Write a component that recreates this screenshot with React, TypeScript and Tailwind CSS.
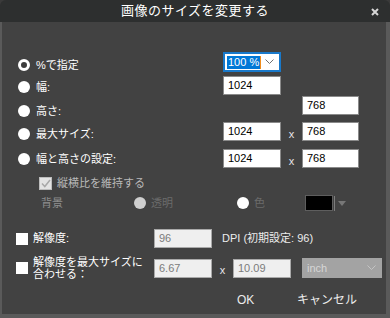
const font = "font-['Liberation_Sans','Noto_Sans_CJK_JP',sans-serif]";

function Radio({ checked, disabled }: { checked?: boolean; disabled?: boolean }) {
  if (checked) {
    return <span className="w-[12px] h-[12px] rounded-full border-[3px] border-white bg-[#3c3c3c] shrink-0" />;
  }
  return <span className={`w-[12px] h-[12px] rounded-full shrink-0 ${disabled ? "bg-[#cfcfcf]" : "bg-white"}`} />;
}

function Box({ value, w = "w-[58px]", disabled }: { value: string; w?: string; disabled?: boolean }) {
  return (
    <div
      className={`${w} h-[19px] shrink-0 flex items-center pl-[4px] text-[11px] border ${
        disabled ? "bg-[#efefef] border-[#a9a9a9] text-[#7b7b7b]" : "bg-white border-[#8a8a8a] text-black"
      }`}
    >
      {value}
    </div>
  );
}

function Times() {
  return <span className="w-[21px] shrink-0 text-center text-[11px] text-[#e6e6e6] mt-[4px]">x</span>;
}

export default function App() {
  return (
    <div className={`w-[390px] h-[318px] bg-[#3a3a3a] ${font} text-[11px] text-white select-none`}>
      <div className="h-[22px] bg-[#2d2f2f] rounded-t-[6px] flex items-center justify-center relative">
        <span className="text-[13px] text-white tracking-[0.5px]">画像のサイズを変更する</span>
        <svg className="absolute right-[11px] top-[8px]" width="8" height="8" viewBox="0 0 8 8">
          <path d="M1 1L7 7M7 1L1 7" stroke="#d6d6d6" strokeWidth="2" />
        </svg>
      </div>

      <div className="h-[296px] bg-[#424242] border-l-2 border-r-4 border-b-4 border-[#5a5a5a] pt-[31px]">
        {/* % */}
        <div className="flex items-start h-[23px] pl-[16px]">
          <div className="w-[205px] flex items-center gap-[6px] mt-[4px]">
            <Radio checked />
            <span>%で指定</span>
          </div>
          <div className="w-[58px] h-[20px] -mt-[1px] border-2 border-[#1979ca] bg-white flex items-center pl-[2px] justify-between pr-[5px]">
            <span className="flex items-center">
              <span className="bg-[#0078d7] text-white text-[11px] px-[1px] leading-[13px]">100 %</span>
              <span className="w-[1px] h-[13px] bg-[#f08c1c]" />
            </span>
            <svg width="9" height="6" viewBox="0 0 9 6">
              <path d="M0.5 0.5L4.5 4.5L8.5 0.5" stroke="#707070" fill="none" />
            </svg>
          </div>
        </div>

        {/* width */}
        <div className="flex items-start h-[20px] pl-[16px]">
          <div className="w-[205px] flex items-center gap-[6px] mt-[3px]">
            <Radio />
            <span>幅:</span>
          </div>
          <Box value="1024" />
        </div>

        {/* height */}
        <div className="flex items-start h-[26px] pl-[16px]">
          <div className="w-[284px] flex items-center gap-[6px] mt-[7px]">
            <Radio />
            <span>高さ:</span>
          </div>
          <Box value="768" w="w-[57px]" />
        </div>

        {/* max size */}
        <div className="flex items-start h-[27px] pl-[16px]">
          <div className="w-[205px] flex items-center gap-[6px] mt-[4px]">
            <Radio />
            <span>最大サイズ:</span>
          </div>
          <Box value="1024" />
          <Times />
          <Box value="768" w="w-[57px]" />
        </div>

        {/* width & height */}
        <div className="flex items-start h-[23px] pl-[16px]">
          <div className="w-[205px] flex items-center gap-[6px] mt-[2px]">
            <Radio />
            <span>幅と高さの設定:</span>
          </div>
          <Box value="1024" />
          <Times />
          <Box value="768" w="w-[57px]" />
        </div>

        {/* aspect */}
        <div className="flex items-center h-[22px] pl-[37px] gap-[5px]">
          <span className="w-[13px] h-[13px] bg-[#e3e3e3] border border-[#bdbdbd] flex items-center justify-center">
            <svg width="10" height="9" viewBox="0 0 10 9">
              <path d="M1 4.5L3.8 7.5L9 1" stroke="#a8a8a8" strokeWidth="1.5" fill="none" />
            </svg>
          </span>
          <span className="text-[#b9b9b9]">縦横比を維持する</span>
        </div>

        {/* background */}
        <div className="flex items-center h-[18px] pl-[39px]">
          <span className="w-[93px] text-[#8e8e8e]">背景</span>
          <div className="w-[103px] flex items-center gap-[5px]">
            <Radio disabled />
            <span className="text-[#6b6b6b]">透明</span>
          </div>
          <div className="w-[68px] flex items-center gap-[5px]">
            <Radio />
            <span className="text-[#6b6b6b]">色</span>
          </div>
          <span className="w-[28px] h-[16px] bg-black border border-[#5e5e5e]" />
          <span className="w-[1px] h-[15px] bg-[#7c7c7c] ml-[1px]" />
          <svg className="ml-[3px] mt-[1px]" width="8" height="5" viewBox="0 0 8 5">
            <path d="M0 0H8L4 5Z" fill="#777777" />
          </svg>
        </div>

        {/* resolution */}
        <div className="flex items-center h-[19px] mt-[17px] pl-[14px]">
          <div className="w-[138px] flex items-center gap-[5px]">
            <span className="w-[12px] h-[12px] bg-white" />
            <span>解像度:</span>
          </div>
          <Box value="96" disabled />
          <span className="ml-[10px] text-[#ececec]">DPI (初期設定: 96)</span>
        </div>

        {/* fit */}
        <div className="flex items-center h-[20px] mt-[10px] pl-[14px]">
          <div className="w-[138px] flex items-center gap-[5px]">
            <span className="w-[12px] h-[12px] bg-white" />
            <span className="leading-[12px]">
              解像度を最大サイズに
              <br />
              合わせる：
            </span>
          </div>
          <Box value="6.67" disabled />
          <Times />
          <Box value="10.09" disabled />
          <div className="ml-[11px] w-[80px] h-[20px] bg-[#a3a3a3] flex items-center justify-between pl-[5px] pr-[6px]">
            <span className="text-[#d6d6d6]">inch</span>
            <svg width="9" height="6" viewBox="0 0 9 6">
              <path d="M0.5 0.5L4.5 4.5L8.5 0.5" stroke="#c4c4c4" fill="none" />
            </svg>
          </div>
        </div>

        {/* buttons */}
        <div className="flex items-center h-[16px] mt-[14px] pl-[235px] text-[#ececec] text-[12px]">
          <button className="w-[60px] text-left">OK</button>
          <button className="text-left">キャンセル</button>
        </div>
      </div>
    </div>
  );
}
